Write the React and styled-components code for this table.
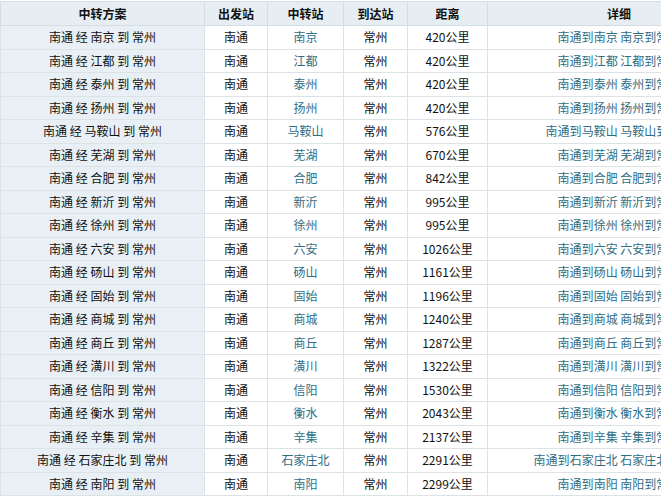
import React from 'react';
import styled, { createGlobalStyle } from 'styled-components';

const GlobalStyle = createGlobalStyle`
  html, body {
    margin: 0;
    padding: 0;
    background: #ffffff;
    overflow: hidden;
  }
  body {
    font-family: "Noto Sans CJK SC", "Liberation Sans", sans-serif;
    font-size: 12px;
    color: #111;
  }
`;

const Table = styled.table`
  border-collapse: collapse;
  table-layout: fixed;
  width: 750px;
  margin-top: 1px;
`;

const HeadCell = styled.th`
  height: 23px;
  padding: 0;
  background: #e6eef3;
  border: 1px solid #d6dde2;
  font-weight: bold;
  font-size: 12px;
  text-align: center;
  color: #111;
  line-height: 1;
`;

const Cell = styled.td`
  height: 22.5px;
  padding: 0;
  border: 1px solid #dde2e5;
  text-align: center;
  white-space: nowrap;
  overflow: hidden;
  line-height: 1;
  background: ${({ $plan }) => ($plan ? '#e8f0f5' : '#ffffff')};
  color: ${({ $link }) => ($link ? '#2f6d84' : '#111')};
`;

const Link = styled.a`
  color: #2f6d84;
  text-decoration: none;
`;

const rows = [
  ['南京', 420],
  ['江都', 420],
  ['泰州', 420],
  ['扬州', 420],
  ['马鞍山', 576],
  ['芜湖', 670],
  ['合肥', 842],
  ['新沂', 995],
  ['徐州', 995],
  ['六安', 1026],
  ['砀山', 1161],
  ['固始', 1196],
  ['商城', 1240],
  ['商丘', 1287],
  ['潢川', 1322],
  ['信阳', 1530],
  ['衡水', 2043],
  ['辛集', 2137],
  ['石家庄北', 2291],
  ['南阳', 2299],
];

const widths = [204, 63, 76, 64, 80, 263];

const App = () => (
  <>
    <GlobalStyle />
    <Table>
      <colgroup>
        {widths.map((w, i) => (
          <col key={i} style={{ width: w }} />
        ))}
      </colgroup>
      <thead>
        <tr>
          <HeadCell>中转方案</HeadCell>
          <HeadCell>出发站</HeadCell>
          <HeadCell>中转站</HeadCell>
          <HeadCell>到达站</HeadCell>
          <HeadCell>距离</HeadCell>
          <HeadCell>详细</HeadCell>
        </tr>
      </thead>
      <tbody>
        {rows.map(([via, km]) => (
          <tr key={via}>
            <Cell $plan>南通 经 {via} 到 常州</Cell>
            <Cell>南通</Cell>
            <Cell $link>{via}</Cell>
            <Cell>常州</Cell>
            <Cell>{km}公里</Cell>
            <Cell>
              <Link href="#">南通到{via}</Link> <Link href="#">{via}到常州</Link>
            </Cell>
          </tr>
        ))}
      </tbody>
    </Table>
  </>
);

export default App;
